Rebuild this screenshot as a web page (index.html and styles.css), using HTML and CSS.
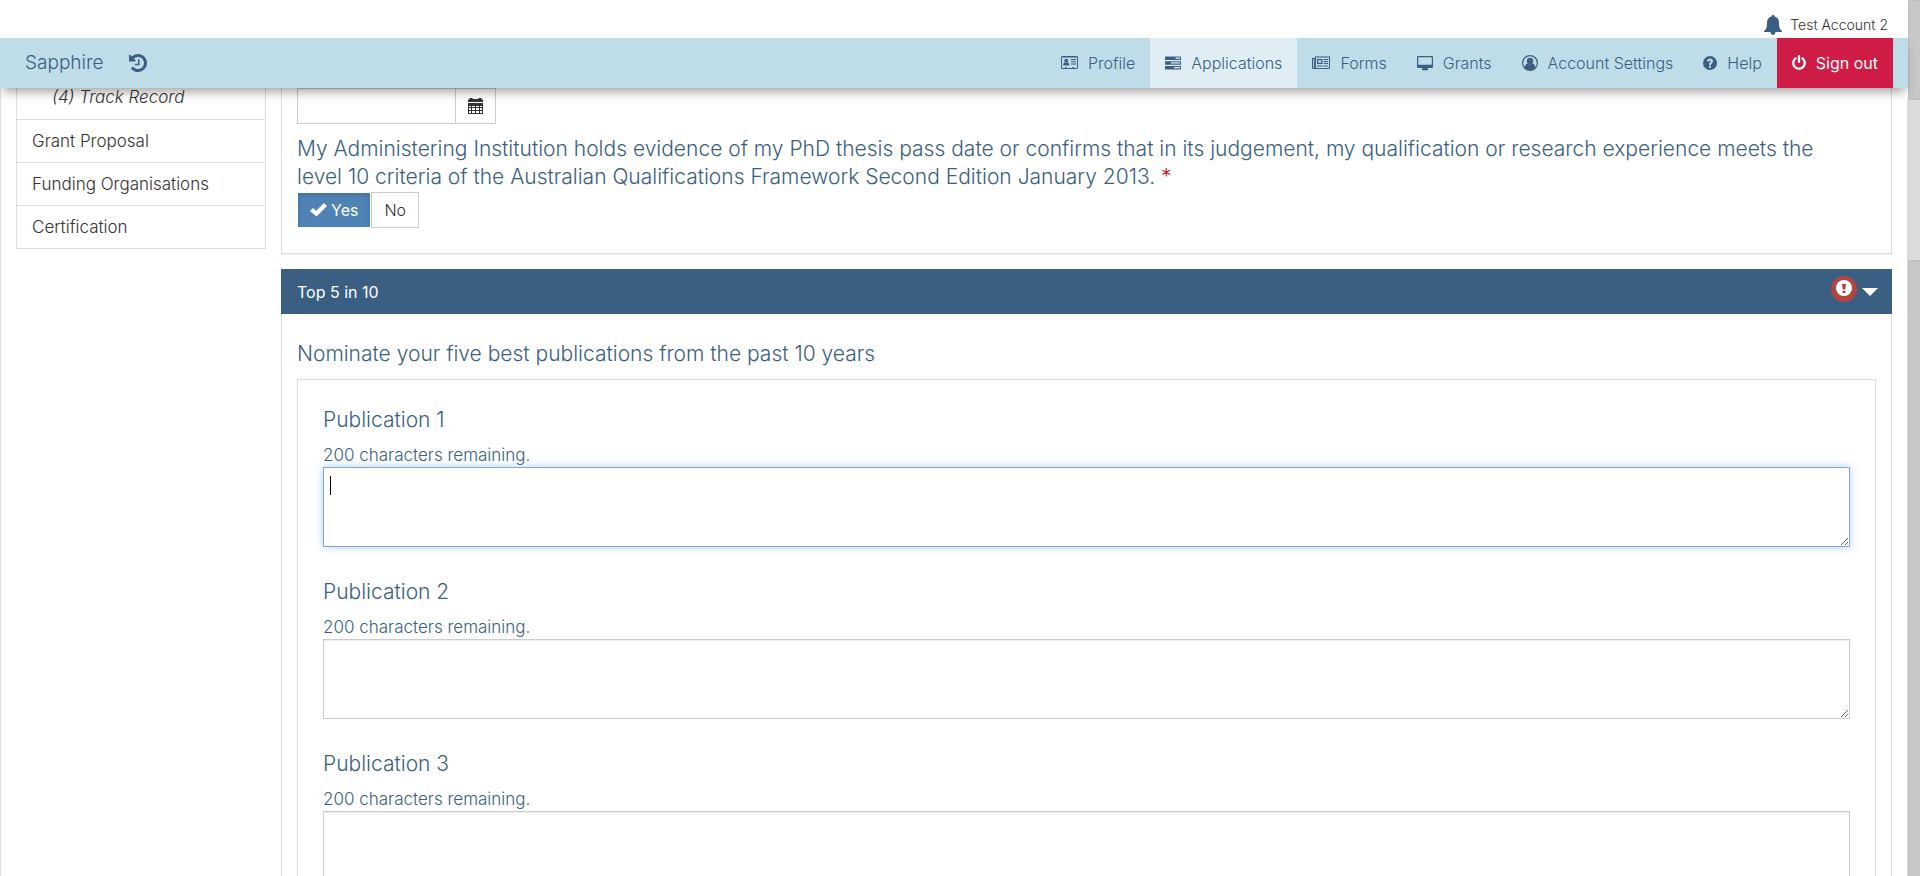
FILE: index.html
```html
<!DOCTYPE html>
<html lang="en">
<head>
<meta charset="utf-8">
<title>Sapphire - Track Record</title>
<link rel="stylesheet" href="styles.css">
</head>
<body>
<div class="window">
  <div class="page">
    <div class="account-bar">
      <svg class="bell" width="18" height="20" viewBox="0 0 18 20" aria-hidden="true"><path d="M9 0c1 0 1.500.6 1.500 1.500C13.500 2.200 15 4.600 15 7.500c0 5 1 7 3 8.500v1h-6.500c-.3 1.800-1.200 3-2.500 3s-2.200-1.200-2.500-3H0v-1c2-1.500 3-3.500 3-8.500 0-2.900 1.500-5.300 4.500-6C7.500.6 8 0 9 0z"/></svg>
      <span>Test Account 2</span>
    </div>
    <nav class="navbar">
      <a class="brand" href="#">Sapphire</a>
      <a class="history" href="#" aria-label="History"><svg width="18" height="18" viewBox="0 128 1536 1536"><path d="M1536 896q0 156-61 298t-164 245-245 164-298 61q-172 0-327-72.500t-264-204.500q-7-10-6.500-22.500t8.500-20.500l137-138q10-9 25-9 16 2 23 12 73 95 179 147t225 52q104 0 198.500-40.500t163.500-109.500 109.500-163.500 40.500-198.500-40.500-198.500-109.500-163.500-163.500-109.500-198.500-40.500q-98 0-188 35.500t-160 101.500l137 138q31 30 14 69-17 40-59 40h-448q-26 0-45-19t-19-45v-448q0-42 40-59 39-17 69 14l130 129q107-101 244.500-156.500t284.500-55.500q156 0 298 61t245 164 164 245 61 298zm-640-288v448q0 14-9 23t-23 9h-320q-14 0-23-9t-9-23v-64q0-14 9-23t23-9h224v-352q0-14 9-23t23-9h64q14 0 23 9t9 23z"/></svg></a>
      <div class="menu">
        <a class="item" href="#"><svg width="17" height="14" viewBox="0 0 17 14"><path fill-rule="evenodd" d="M1.500 0h14A1.500 1.500 0 0 1 17 1.500v10a1.500 1.500 0 0 1-1.500 1.500h-14A1.500 1.500 0 0 1 0 11.500v-10A1.500 1.500 0 0 1 1.500 0zM1 1.500v10.500h3v-1h1.500v1h6v-1H13v1h3V1.500z"/><circle cx="5.200" cy="4.600" r="1.900"/><path d="M2.200 9.500c0-2 .6-3 1.700-3.200.8.600 1.800.6 2.600 0 1.200.2 1.700 1.200 1.700 3.200zM10 3h5v1h-5zM10 5.200h5v1h-5zM10 7.500h5v1h-5z"/></svg>Profile</a>
        <a class="item active" href="#"><svg width="16" height="14" viewBox="0 0 16 14"><path fill-rule="evenodd" d="M0 .5h16v3.500H0zM10.500 1.500v1.300H15V1.500zM0 5.200h16v3.500H0zM6 6.300v1.300h9V6.300zM0 10h16v3.500H0zM9 11v1.300h6V11z"/></svg>Applications</a>
        <a class="item" href="#"><svg width="18" height="14" viewBox="0 0 18 14"><path fill-rule="evenodd" d="M3 .5h15v11a1.500 1.500 0 0 1-1.500 1.500h-15A1.500 1.500 0 0 1 0 11.500V2h3zM4 1.500v10.500h12.500l.5-.5v-10zM1.200 3v8.500q.4.700 1 0V3z"/><path fill-rule="evenodd" d="M5 3h5.500v5H5zM6.200 4.200v2.600h3V4.200z"/><path d="M11.500 3H16v1h-4.500zM11.500 5H16v1h-4.500zM11.500 7H16v1h-4.500zM5 9.500h5.500v1H5zM11.500 9.500H16v1h-4.500z"/></svg>Forms</a>
        <a class="item" href="#"><svg width="16" height="15" viewBox="0 0 16 15"><path fill-rule="evenodd" d="M1.200 0h13.600Q16 0 16 1.200v9.600q0 1.200-1.200 1.200H10.500l.5 1.500v.8H5v-.8L5.500 12H1.200Q0 12 0 10.800V1.200Q0 0 1.200 0zM1.200 1.200v7.600h13.600V1.200z"/></svg>Grants</a>
        <a class="item" href="#"><svg width="16" height="16" viewBox="0 0 16 16"><circle cx="8" cy="8" r="7.400" fill="none" stroke="currentColor" stroke-width="1.200"/><circle cx="8" cy="6" r="3.200"/><path d="M2.500 12.500c.4-2.400 1.500-3.600 3-3.900 1.600 1 3.400 1 5 0 1.500.3 2.600 1.500 3 3.900-3 3.500-8 3.500-11 0z"/></svg>Account Settings</a>
        <a class="item" href="#"><svg width="14" height="14" viewBox="0 0 14 14"><path fill-rule="evenodd" d="M7 0a7 7 0 1 1 0 14A7 7 0 0 1 7 0zM6 9.800v1.900h2V9.800zM3.800 4.700l1.500 1.100C6.200 4.600 7.800 4.500 7.800 5.400 7.800 6.300 6 6.400 6 8.300v.7h2c0-1.500 2-1.500 2-3.700 0-3.200-4.600-4-6.200-.6z"/></svg>Help</a>
        <a class="item sign-out" href="#"><svg width="14" height="16" viewBox="0 0 1536 1792"><path d="M1536 896q0 156-61 298t-164 245-245 164-298 61-298-61-245-164-164-245-61-298q0-182 80.500-343t226.500-270q43-32 95.500-25t83.500 50q32 42 24.500 94.500t-49.500 84.500q-98 74-151.500 181t-53.500 228q0 104 40.500 198.500t109.500 163.500 163.500 109.500 198.500 40.500 198.500-40.500 163.500-109.500 109.500-163.500 40.500-198.500q0-121-53.500-228t-151.500-181q-42-32-49.500-84.500t24.500-94.500q31-43 84-50t95 25q146 109 226.500 270t80.500 343zm-640-768v640q0 52-38 90t-90 38-90-38-38-90v-640q0-52 38-90t90-38 90 38 38 90z"/></svg>Sign out</a>
      </div>
    </nav>
    <div class="body">
      <aside class="sidebar">
        <a class="step current" href="#">(4) Track Record</a>
        <a class="step" href="#">Grant Proposal</a>
        <a class="step" href="#">Funding Organisations</a>
        <a class="step" href="#">Certification</a>
      </aside>
      <main class="content">
        <section class="panel first">
          <div class="date">
            <input class="date-input" type="text" aria-label="PhD thesis pass date">
            <button class="date-button" type="button" aria-label="Choose date"><svg width="15" height="16" viewBox="0 0 15 16"><path fill-rule="evenodd" d="M0 1.500h1.500V0h3v1h6V0h3v1.500H15V4H0zM0 5h15v11H0zM1 8v1h2V8zM4 8v1h3V8zM8 8v1h3V8zM12 8v1h2V8zM1 10v2h2v-2zM4 10v2h3v-2zM8 10v2h3v-2zM12 10v2h2v-2zM1 13v2h2v-2zM4 13v2h3v-2zM8 13v2h3v-2zM12 13v2h2v-2z"/></svg></button>
          </div>
          <p class="question" id="evidence">My Administering Institution holds evidence of my PhD thesis pass date or confirms that in its judgement, my qualification or research experience meets the level 10 criteria of the Australian Qualifications Framework Second Edition January 2013. <span class="required">*</span></p>
          <div class="toggle" role="group" aria-labelledby="evidence">
            <button class="choice chosen" type="button" aria-pressed="true"><svg width="17" height="14" viewBox="0 0 17 14"><path d="M0 8l3-3 3.200 2.700L14 0l3 3L6.500 13.500z"/></svg>Yes</button>
            <button class="choice" type="button" aria-pressed="false">No</button>
          </div>
        </section>
        <section class="panel">
          <header class="panel-head">
            <h2 class="panel-title">Top 5 in 10</h2>
            <svg class="alert" width="26" height="26" viewBox="0 0 26 26" aria-hidden="true"><circle cx="13" cy="13" r="13" fill="#b34541"/><circle cx="13" cy="12" r="8" fill="#fff"/><path fill="#b34541" d="M11 8h4l-.7 5.500h-2.600zM11.500 14.700h3V17h-3z"/></svg>
            <button class="collapse" type="button" aria-label="Collapse section"><svg width="16" height="8" viewBox="0 0 16 8"><path d="M0 0h16L8 8z"/></svg></button>
          </header>
          <div class="panel-body">
            <h3 class="lead">Nominate your five best publications from the past 10 years</h3>
            <div class="publications">
              <div class="field">
                <label class="label" for="pub1">Publication 1</label>
                <span class="remaining">200 characters remaining.</span>
                <div class="entry focused"><textarea class="text" id="pub1"></textarea></div>
              </div>
              <div class="field">
                <label class="label" for="pub2">Publication 2</label>
                <span class="remaining">200 characters remaining.</span>
                <div class="entry"><textarea class="text" id="pub2"></textarea></div>
              </div>
              <div class="field">
                <label class="label" for="pub3">Publication 3</label>
                <span class="remaining">200 characters remaining.</span>
                <div class="entry"><textarea class="text" id="pub3"></textarea></div>
              </div>
            </div>
          </div>
        </section>
      </main>
    </div>
  </div>
  <div class="scroll" aria-hidden="true">
    <div class="thumb outer"></div>
    <div class="track"></div>
    <div class="thumb inner"></div>
  </div>
</div>
</body>
</html>
```
FILE: styles.css
```css
* { box-sizing: border-box; }

body {
  margin: 0;
  background: #fff;
  color: #333;
  font: 300 17px/24px Inter, "Liberation Sans", sans-serif;
}

a { color: inherit; text-decoration: none; }
button, input, textarea { font: inherit; color: inherit; border-radius: 0; }
svg { display: block; flex: none; fill: currentColor; }

.window { display: flex; height: 100vh; overflow: hidden; }
.page { flex: 1; min-width: 0; display: flex; flex-direction: column; }

.account-bar {
  flex: none;
  display: flex;
  justify-content: flex-end;
  align-items: center;
  gap: 8px;
  height: 38px;
  padding: 12px 20px 0 0;
  font-size: 14px;
}
.bell { color: #3a5f82; }

.navbar {
  position: relative;
  z-index: 1;
  flex: none;
  display: flex;
  align-items: center;
  height: 50px;
  padding: 0 15px 0 25px;
  background: #bfdde8;
  color: #3a5f82;
  font-size: 16px;
  box-shadow: 0 7px 10px -3px rgba(0, 0, 0, .36);
}
.brand { font-size: 19px; }
.history { margin-left: 26px; }
.menu { display: flex; align-self: stretch; margin-left: auto; }
.item { display: flex; align-items: center; gap: 10px; padding: 0 15px; }
.active { background: #dfeef4; }
.sign-out { background: #cf1c46; color: #fff; font-weight: 400; }

.body {
  flex: 1;
  display: flex;
  align-items: flex-start;
  gap: 15px;
  min-height: 0;
  padding: 0 16px 0 15px;
  border-left: 1px solid #ddd;
}

.sidebar {
  flex: none;
  width: 250px;
  border: 1px solid #ddd;
  border-top: 0;
}
.step { display: block; padding: 9px 15px; border-top: 1px solid #ddd; }
.current { padding: 0 35px 13px; border-top: 0; font-style: italic; line-height: 18px; }

.content { flex: 1; min-width: 0; }
.panel {
  border: 1px solid #ddd;
  margin-bottom: 15px;
  box-shadow: 0 1px 1px rgba(0, 0, 0, .05);
}
.first { padding: 0 15px 25px; border-top: 0; }

.date { display: flex; margin-bottom: 11px; }
.date-input { width: 159px; height: 36px; border: 1px solid #ccc; background: #fff; }
.date-button {
  display: flex;
  align-items: center;
  justify-content: center;
  width: 41px;
  margin-left: -1px;
  padding: 0;
  border: 1px solid #ccc;
  background: #fff;
}
.question {
  margin: 0 0 1px;
  padding-right: 25px;
  color: #3a5f82;
  font-size: 21px;
  line-height: 28px;
}
.required { color: #b02020; }

.toggle { display: flex; font-size: 16px; }
.choice {
  display: flex;
  align-items: center;
  gap: 4px;
  height: 36px;
  padding: 0 12px;
  border: 1px solid #ccc;
  background: #fff;
}
.chosen {
  border-color: #fff;
  background: #5083b5;
  color: #fff;
  font-weight: 400;
  box-shadow: inset 0 3px 5px rgba(0, 0, 0, .12);
}

.panel-head {
  display: flex;
  align-items: center;
  gap: 5px;
  height: 45px;
  margin: -1px -1px 0;
  padding: 0 14px 0 16px;
  background: #3a5f82;
  color: #fff;
}
.panel-title { flex: 1; margin: 0; font-size: 16px; font-weight: 400; }
.alert { margin-bottom: 5px; }
.collapse { padding: 0; border: 0; background: none; color: #fff; }

.panel-body { padding: 26px 15px; }
.lead { margin: 0 0 11px; color: #3a5f82; font-size: 21px; font-weight: 300; line-height: 28px; }
.publications {
  display: grid;
  gap: 30px;
  padding: 26px 25px;
  border: 1px solid #ddd;
}
.field { display: flex; flex-direction: column; color: #3a5f82; }
.label { margin-bottom: 9px; font-size: 21px; line-height: 28px; }
.entry { position: relative; margin-top: 1px; }
.remaining { margin-bottom: -1px; }
.text {
  display: block;
  width: 100%;
  height: 80px;
  padding: 6px;
  border: 1px solid #ccc;
  background: #fff;
  outline: 0;
  resize: vertical;
  box-shadow: inset 0 1px 1px rgba(0, 0, 0, .075);
}
.publications .field + .field { padding-top: 1px; }
.focused .text { border-color: #7fa8e6; box-shadow: 0 0 8px rgba(102, 160, 233, .5); }
.focused::after {
  content: "";
  position: absolute;
  left: 7px;
  top: 9px;
  width: 1px;
  height: 19px;
  background: #000;
}

.scroll { flex: none; display: flex; flex-direction: column; width: 12px; }
.thumb { background: #c8c8c8; border: 1px solid #bdbdbd; border-right-width: 0; }
.outer { height: 100px; }
.track { height: 160px; background: #dcdcdc; box-shadow: -1px 0 #dcdcdc; }
.inner { flex: 1; border-bottom: 0; box-shadow: -1px 0 #dcdcdc; }
```
